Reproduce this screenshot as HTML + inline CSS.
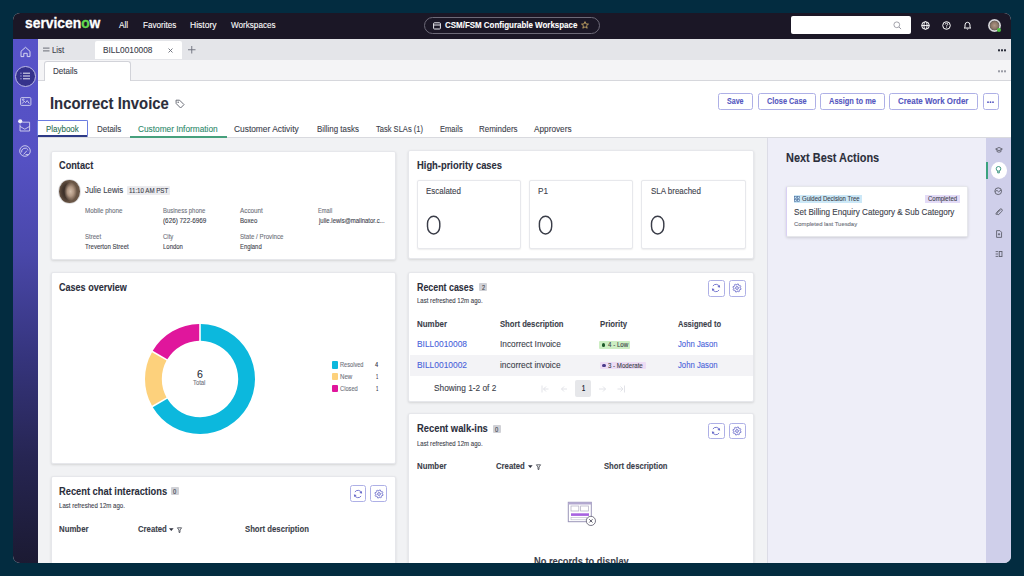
<!DOCTYPE html>
<html><head><meta charset="utf-8">
<style>
*{margin:0;padding:0;box-sizing:border-box}
html,body{width:1024px;height:576px;overflow:hidden;background:#032c40;font-family:"Liberation Sans",sans-serif;color:#2b2e3b}
.a{position:absolute}
.win{position:absolute;left:0;top:0;width:1024px;height:576px;clip-path:inset(13px 13px 13px 13px round 7px);background:#f1f2f4}
.t{position:absolute;white-space:nowrap;line-height:1;transform-origin:0 0;-webkit-text-stroke:0.1px currentColor}
.card{position:absolute;background:#fff;border:1px solid #e6e7eb;border-radius:2px;box-shadow:0 1px 2.5px rgba(0,0,0,.12)}
svg{position:absolute;overflow:visible}
</style></head><body>
<div class="win">
<!-- navbar -->
<div class="a" style="left:13px;top:13px;width:998px;height:25.5px;background:#1b1726"></div>
<div class="t" style="left:25px;top:16.1px;font-size:14.8px;font-weight:bold;color:#fff;transform:scaleX(0.935);-webkit-text-stroke:0.3px #fff">servicen<span style="color:#62d84e;-webkit-text-stroke:0.3px #62d84e">o</span>w</div>
<div class="a" style="left:424px;top:17px;width:176px;height:16.5px;border:1px solid #6d6a78;border-radius:9px"></div>
<svg style="left:433px;top:21.5px" width="8" height="8" viewBox="0 0 8 8"><rect x="0.6" y="0.8" width="6.8" height="6.2" rx="0.8" fill="none" stroke="#e8e8ee" stroke-width="1"/><line x1="0.6" y1="3" x2="7.4" y2="3" stroke="#e8e8ee" stroke-width="1"/></svg>
<svg style="left:581px;top:21px" width="8" height="8" viewBox="0 0 10 10"><path d="M5 0.8 L6.2 3.7 L9.3 3.9 L6.9 5.9 L7.7 9 L5 7.3 L2.3 9 L3.1 5.9 L0.7 3.9 L3.8 3.7 Z" fill="none" stroke="#c9a865" stroke-width="1.1" stroke-linejoin="round"/></svg>
<div class="a" style="left:790.5px;top:16.3px;width:120px;height:18px;background:#fff;border-radius:2px"></div>
<svg style="left:893px;top:21px" width="9" height="9" viewBox="0 0 10 10"><circle cx="4.2" cy="4.2" r="3.2" fill="none" stroke="#9a9aa3" stroke-width="1"/><line x1="6.6" y1="6.6" x2="9" y2="9" stroke="#9a9aa3" stroke-width="1.1"/></svg>
<svg style="left:920.5px;top:20.5px" width="9" height="9" viewBox="0 0 9 9"><circle cx="4.5" cy="4.5" r="3.8" fill="none" stroke="#fff" stroke-width="1"/><ellipse cx="4.5" cy="4.5" rx="1.6" ry="3.8" fill="none" stroke="#fff" stroke-width="0.9"/><line x1="0.7" y1="4.5" x2="8.3" y2="4.5" stroke="#fff" stroke-width="0.9"/></svg>
<svg style="left:941.5px;top:20.5px" width="9" height="9" viewBox="0 0 9 9"><circle cx="4.5" cy="4.5" r="3.8" fill="none" stroke="#fff" stroke-width="1"/><path d="M3.2 3.5 Q3.3 2.2 4.5 2.2 Q5.8 2.2 5.8 3.3 Q5.8 4.1 4.6 4.6 L4.6 5.5" fill="none" stroke="#fff" stroke-width="0.9"/><circle cx="4.6" cy="6.7" r="0.5" fill="#fff"/></svg>
<svg style="left:962.5px;top:20.5px" width="9" height="9" viewBox="0 0 9 9"><path d="M2 6.5 L2 4 Q2 1.3 4.5 1.3 Q7 1.3 7 4 L7 6.5 L7.8 7 L1.2 7 Z" fill="none" stroke="#fff" stroke-width="0.95" stroke-linejoin="round"/><path d="M3.7 7.8 Q4.5 8.6 5.3 7.8" fill="none" stroke="#fff" stroke-width="0.9"/></svg>
<div class="a" style="left:987.7px;top:18.9px;width:13px;height:13px;border-radius:50%;background:radial-gradient(circle closest-side,#b09888 0%,#8e7868 50%,#6a625c 72%,#e0e0e4 80%,#c8c8cc 100%)"></div><div class="a" style="left:997px;top:28px;width:4px;height:4px;border-radius:50%;background:#4cc43e"></div>
<!-- left sidebar -->
<div class="a" style="left:13px;top:38.5px;width:25px;height:525px;background:linear-gradient(#5753c8 0%,#5551c3 23%,#4a48ab 40%,#35347c 61%,#262552 80%,#1b1a32 100%)"></div>
<svg style="left:19px;top:45.5px" width="13" height="12" viewBox="0 0 13 12"><path d="M2 10.6 L2 5.3 L6.5 1.3 L11 5.3 L11 10.6 L8.2 10.6 L8.2 7.3 L4.8 7.3 L4.8 10.6 Z" fill="none" stroke="#dcdcf2" stroke-width="0.95" stroke-linejoin="round"/></svg>
<div class="a" style="left:15px;top:65.8px;width:21px;height:21px;border-radius:50%;background:#35328c;border:1px solid #bdbbe4"></div>
<svg style="left:20px;top:72px" width="11" height="8" viewBox="0 0 11 8"><g stroke="#f4f4fc" stroke-width="0.95"><line x1="3" y1="1.2" x2="10" y2="1.2"/><line x1="3" y1="4" x2="10" y2="4"/><line x1="3" y1="6.8" x2="10" y2="6.8"/></g><g stroke="#b8b6e6" stroke-width="0.95"><line x1="0.3" y1="1.2" x2="1.6" y2="1.2"/><line x1="0.3" y1="4" x2="1.6" y2="4"/><line x1="0.3" y1="6.8" x2="1.6" y2="6.8"/></g></svg>
<svg style="left:19.7px;top:96.6px" width="11.5" height="9" viewBox="0 0 11.5 9"><g fill="none" stroke="#dcdcf2" stroke-width="0.85"><rect x="0.6" y="0.6" width="10.3" height="7.8" rx="1"/><path d="M2.2 6.6 L4.2 4.2 L5.6 5.6 L7.2 3.6 L9.3 6.6"/><circle cx="3.2" cy="2.7" r="0.8"/></g></svg>
<svg style="left:18.2px;top:118.6px" width="13" height="13" viewBox="0 0 13 13"><g fill="none" stroke="#dcdcf2" stroke-width="0.85"><path d="M4.2 3.2 H11.6 V12 H2 V5.5"/><path d="M2 7.4 L6.8 10.2 L11.6 7.4"/></g><circle cx="2.2" cy="2.3" r="2.1" fill="#f0f0fa"/></svg>
<svg style="left:19.3px;top:145.3px" width="12" height="12" viewBox="0 0 12 12"><g fill="none" stroke="#dcdcf2" stroke-width="0.85"><circle cx="6" cy="6" r="5.3"/><path d="M2.6 7.4 A3.6 3.6 0 0 1 9.3 5"/><path d="M4.6 9.4 L8 5.6"/><path d="M6.5 9.6 H9.6"/></g></svg>
<!-- tab row 1 -->
<div class="a" style="left:38px;top:38.5px;width:973px;height:21px;background:#e4e5e9"></div>
<div class="a" style="left:95px;top:40.8px;width:87px;height:18.7px;background:#fff;border-radius:2px 2px 0 0"></div>
<svg style="left:43px;top:47.2px" width="6.5" height="5" viewBox="0 0 7 5"><g stroke="#4a4d58" stroke-width="0.85"><line x1="0" y1="1" x2="7" y2="1"/><line x1="0" y1="4" x2="7" y2="4"/></g></svg>
<svg style="left:167.5px;top:47.5px" width="5" height="5" viewBox="0 0 5 5"><g stroke="#6a6d78" stroke-width="0.9"><line x1="0.5" y1="0.5" x2="4.5" y2="4.5"/><line x1="4.5" y1="0.5" x2="0.5" y2="4.5"/></g></svg>
<svg style="left:188.2px;top:46.2px" width="7.5" height="7.5" viewBox="0 0 8 8"><g stroke="#6a6d78" stroke-width="0.95"><line x1="4" y1="0" x2="4" y2="8"/><line x1="0" y1="4" x2="8" y2="4"/></g></svg>
<svg style="left:998px;top:49px" width="8" height="3" viewBox="0 0 8 3"><g fill="#2b2e3b"><rect x="0" y="0.3" width="2" height="2"/><rect x="3" y="0.3" width="2" height="2"/><rect x="6" y="0.3" width="2" height="2"/></g></svg>
<!-- tab row 2 -->
<div class="a" style="left:38px;top:59.5px;width:973px;height:21.5px;background:#f4f4f6;border-bottom:1px solid #d6d7dc"></div>
<div class="a" style="left:44px;top:61px;width:87px;height:20px;background:#fff;border:1px solid #d2d3d9;border-bottom:none;border-radius:3px 3px 0 0"></div>
<svg style="left:998px;top:70px" width="8" height="3" viewBox="0 0 8 3"><g fill="#9a9ca6"><rect x="0" y="0.3" width="2" height="2"/><rect x="3" y="0.3" width="2" height="2"/><rect x="6" y="0.3" width="2" height="2"/></g></svg>
<!-- header -->
<div class="a" style="left:38px;top:81px;width:973px;height:57px;background:#fff;border-bottom:1px solid #d9dadf"></div>
<svg style="left:174.8px;top:98.6px" width="10" height="10" viewBox="0 0 10 10"><path d="M1 1.2 L4.6 1.2 L9 5.6 L5.6 9 L1.2 4.6 Z" fill="none" stroke="#6b6e78" stroke-width="1" stroke-linejoin="round"/><circle cx="3.2" cy="3.3" r="0.8" fill="#6b6e78"/></svg>
<div class="a" style="left:718.2px;top:93.2px;width:35px;height:16.8px;border:1px solid #aeb0e6;border-radius:2.5px"></div>
<div class="a" style="left:757.5px;top:93.2px;width:58px;height:16.8px;border:1px solid #aeb0e6;border-radius:2.5px"></div>
<div class="a" style="left:820px;top:93.2px;width:64.6px;height:16.8px;border:1px solid #aeb0e6;border-radius:2.5px"></div>
<div class="a" style="left:889.2px;top:93.2px;width:88.5px;height:16.8px;border:1px solid #aeb0e6;border-radius:2.5px"></div>
<div class="a" style="left:982.5px;top:93.2px;width:16.2px;height:16.8px;border:1px solid #aeb0e6;border-radius:2.5px"></div>
<svg style="left:987px;top:100.8px" width="7" height="2.5" viewBox="0 0 7 2.5"><g fill="#5456c0"><circle cx="1" cy="1.2" r="0.9"/><circle cx="3.5" cy="1.2" r="0.9"/><circle cx="6" cy="1.2" r="0.9"/></g></svg>
<!-- tab bar -->
<div class="a" style="left:37.2px;top:120.4px;width:50.6px;height:16.8px;border:1.7px solid #6a7ce0;border-bottom:2px solid #2d3a86;border-radius:1.5px"></div>
<div class="a" style="left:130px;top:135.8px;width:96.5px;height:2px;background:#46a07c"></div>
<!-- content cards -->
<div class="card" style="left:50.7px;top:150.6px;width:345px;height:109.8px"></div>
<div class="card" style="left:50.7px;top:272.3px;width:345px;height:192px"></div>
<div class="card" style="left:50.7px;top:476.4px;width:345px;height:110px"></div>
<div class="card" style="left:408.3px;top:150.4px;width:345.3px;height:108.4px"></div>
<div class="card" style="left:408.3px;top:272px;width:345.3px;height:129.5px"></div>
<div class="card" style="left:408.3px;top:413.4px;width:345.3px;height:160px"></div>
<!-- contact avatar + badge -->
<div class="a" style="left:59.2px;top:180px;width:20.5px;height:22.6px;border-radius:50%;background:radial-gradient(ellipse closest-side at 35% 50%,#2c221e 0%,#47382f 60%,#6a5646 100%);box-shadow:0 0 0 0.8px #d8d8dc;overflow:hidden"><div class="a" style="left:5px;top:2px;width:13px;height:19px;border-radius:50%;background:radial-gradient(ellipse closest-side,#d2bdaa 0%,#b09682 50%,rgba(140,112,92,0) 100%)"></div></div>
<div class="a" style="left:126.6px;top:186.2px;width:43.4px;height:8.6px;background:#ebebee;border-radius:1px"></div>
<!-- hp inner cards -->
<div class="card" style="left:417.3px;top:179.8px;width:103.7px;height:69.7px;box-shadow:0 0.5px 1.5px rgba(0,0,0,.07);border-color:#e7e8ec"></div>
<div class="card" style="left:529.4px;top:179.8px;width:103.6px;height:69.7px;box-shadow:0 0.5px 1.5px rgba(0,0,0,.07);border-color:#e7e8ec"></div>
<div class="card" style="left:641.4px;top:179.8px;width:104.5px;height:69.7px;box-shadow:0 0.5px 1.5px rgba(0,0,0,.07);border-color:#e7e8ec"></div>
<!-- donut -->
<svg style="left:143.6px;top:322.7px" width="112" height="112" viewBox="0 0 112 112"><path d="M56.80 1.01 A55 55 0 1 1 8.77 84.19 L23.33 75.79 A38.2 38.2 0 1 0 56.80 17.81 Z" fill="#0cb8dd"/><path d="M7.97 82.80 A55 55 0 0 1 7.97 29.20 L22.53 37.60 A38.2 38.2 0 0 0 22.53 74.40 Z" fill="#fdd17c"/><path d="M8.77 27.81 A55 55 0 0 1 55.20 1.01 L55.20 17.81 A38.2 38.2 0 0 0 23.33 36.21 Z" fill="#e0169c"/></svg>
<div class="a" style="left:331.5px;top:361.3px;width:6.2px;height:7.5px;background:#0cb8dd;border-radius:1px"></div>
<div class="a" style="left:331.5px;top:373.4px;width:6.2px;height:7px;background:#fdd17c;border-radius:1px"></div>
<div class="a" style="left:331.5px;top:385px;width:6.2px;height:7.2px;background:#e0169c;border-radius:1px"></div>
<!-- refresh/settings buttons -->
<div class="a" style="left:708px;top:280px;width:16.8px;height:16.6px;border:1px solid #aeb0e6;border-radius:2.5px"></div>
<div class="a" style="left:728.8px;top:280px;width:16.9px;height:16.6px;border:1px solid #aeb0e6;border-radius:2.5px"></div>
<div class="a" style="left:708px;top:422.8px;width:16.8px;height:16.6px;border:1px solid #aeb0e6;border-radius:2.5px"></div>
<div class="a" style="left:728.8px;top:422.8px;width:16.9px;height:16.6px;border:1px solid #aeb0e6;border-radius:2.5px"></div>
<div class="a" style="left:349.6px;top:485.4px;width:16.8px;height:16.8px;border:1px solid #aeb0e6;border-radius:2.5px"></div>
<div class="a" style="left:370.3px;top:485.4px;width:16.6px;height:16.8px;border:1px solid #aeb0e6;border-radius:2.5px"></div>
<!-- badges -->
<div class="a" style="left:478.8px;top:282.6px;width:8.7px;height:8px;background:#d0d1d6;border-radius:1px"></div>
<div class="a" style="left:492.5px;top:424.6px;width:8px;height:8px;background:#d0d1d6;border-radius:1px"></div>
<div class="a" style="left:170.7px;top:487.3px;width:8.3px;height:8px;background:#d0d1d6;border-radius:1px"></div>
<!-- recent cases rows -->
<div class="a" style="left:410px;top:355px;width:343px;height:20.5px;background:#f3f3f6"></div>
<div class="a" style="left:598.8px;top:341.2px;width:31.2px;height:7.6px;background:#cdeec3;border-radius:1px"></div>
<div class="a" style="left:599.5px;top:361.5px;width:46.2px;height:7.6px;background:#eddcf5;border-radius:1px"></div>
<div class="a" style="left:575.3px;top:380px;width:16.2px;height:16.5px;background:#e6e7ea;border-radius:2px"></div>
<!-- nba -->
<div class="a" style="left:766.8px;top:138px;width:219.2px;height:425px;background:#eeeef8;border-left:1px solid #dcdce6"></div>
<div class="a" style="left:986px;top:138px;width:25px;height:425px;background:#cfcfea"></div>
<div class="card" style="left:786.2px;top:186px;width:181.6px;height:51px;border-left:1.5px solid #d9d0f4;box-shadow:0 1px 3px rgba(0,0,0,.14)"></div>
<div class="a" style="left:793.7px;top:195px;width:68.7px;height:7.6px;background:#cce8f7"></div>
<div class="a" style="left:925px;top:195px;width:34.7px;height:7.6px;background:#e3dbf7"></div>
<!-- hp zeros -->
<svg style="left:420px;top:210px" width="30" height="30" viewBox="0 0 30 30"><rect x="7.5" y="6.2" width="12.3" height="17.7" rx="6.15" ry="7.4" fill="none" stroke="#3a3d48" stroke-width="1.45"/></svg>
<svg style="left:532px;top:210px" width="30" height="30" viewBox="0 0 30 30"><rect x="7.4" y="6.2" width="12.3" height="17.7" rx="6.15" ry="7.4" fill="none" stroke="#3a3d48" stroke-width="1.45"/></svg>
<svg style="left:644px;top:210px" width="30" height="30" viewBox="0 0 30 30"><rect x="7.5" y="6.2" width="12.3" height="17.7" rx="6.15" ry="7.4" fill="none" stroke="#3a3d48" stroke-width="1.45"/></svg>
<!-- priority dots -->
<div class="a" style="left:601.8px;top:343.2px;width:3.6px;height:3.6px;border-radius:50%;background:#1f5a2a"></div>
<div class="a" style="left:602px;top:363.8px;width:3.6px;height:3.6px;border-radius:50%;background:#4a3a8a"></div>
<!-- pagination arrows -->
<svg style="left:541px;top:384.5px" width="85" height="8" viewBox="0 0 85 8"><g fill="none" stroke="#e2e3e8" stroke-width="1"><path d="M1 0.5 V7.5 M7.5 4 H2.5 M5 1.5 L2.5 4 L5 6.5"/><path d="M26 4 H20.5 M23 1.5 L20.5 4 L23 6.5"/><path d="M58 4 H64.5 M62 1.5 L64.5 4 L62 6.5"/><path d="M76.5 4 H82 M79.5 1.5 L82 4 L79.5 6.5 M83.5 0.5 V7.5"/></g></svg>
<!-- refresh & gear icons -->
<svg style="left:711.4px;top:283.3px" width="10" height="10" viewBox="0 0 10 10"><g fill="none" stroke="#6062c6" stroke-width="0.85"><path d="M8.6 4.2 A3.7 3.7 0 0 0 1.9 3"/><path d="M1.4 5.8 A3.7 3.7 0 0 0 8.1 7"/></g><path d="M8.9 1.9 L8.9 4.6 L6.4 4.1 Z" fill="#6062c6"/><path d="M1.1 8.1 L1.1 5.4 L3.6 5.9 Z" fill="#6062c6"/></svg>
<svg style="left:732.2px;top:283.3px" width="10" height="10" viewBox="0 0 10 10"><g fill="none" stroke="#6466c8" stroke-width="0.85" stroke-linejoin="round"><path d="M8.20 5.00 L9.07 5.48 L8.79 6.57 L7.79 6.56 L7.26 7.26 L7.54 8.22 L6.57 8.79 L5.87 8.08 L5.00 8.20 L4.52 9.07 L3.43 8.79 L3.44 7.79 L2.74 7.26 L1.78 7.54 L1.21 6.57 L1.92 5.87 L1.80 5.00 L0.93 4.52 L1.21 3.43 L2.21 3.44 L2.74 2.74 L2.46 1.78 L3.43 1.21 L4.13 1.92 L5.00 1.80 L5.48 0.93 L6.57 1.21 L6.56 2.21 L7.26 2.74 L8.22 2.46 L8.79 3.43 L8.08 4.13 Z"/><circle cx="5" cy="5" r="1.4"/></g></svg>
<svg style="left:711.4px;top:426.1px" width="10" height="10" viewBox="0 0 10 10"><g fill="none" stroke="#6062c6" stroke-width="0.85"><path d="M8.6 4.2 A3.7 3.7 0 0 0 1.9 3"/><path d="M1.4 5.8 A3.7 3.7 0 0 0 8.1 7"/></g><path d="M8.9 1.9 L8.9 4.6 L6.4 4.1 Z" fill="#6062c6"/><path d="M1.1 8.1 L1.1 5.4 L3.6 5.9 Z" fill="#6062c6"/></svg>
<svg style="left:732.2px;top:426.1px" width="10" height="10" viewBox="0 0 10 10"><g fill="none" stroke="#6466c8" stroke-width="0.85" stroke-linejoin="round"><path d="M8.20 5.00 L9.07 5.48 L8.79 6.57 L7.79 6.56 L7.26 7.26 L7.54 8.22 L6.57 8.79 L5.87 8.08 L5.00 8.20 L4.52 9.07 L3.43 8.79 L3.44 7.79 L2.74 7.26 L1.78 7.54 L1.21 6.57 L1.92 5.87 L1.80 5.00 L0.93 4.52 L1.21 3.43 L2.21 3.44 L2.74 2.74 L2.46 1.78 L3.43 1.21 L4.13 1.92 L5.00 1.80 L5.48 0.93 L6.57 1.21 L6.56 2.21 L7.26 2.74 L8.22 2.46 L8.79 3.43 L8.08 4.13 Z"/><circle cx="5" cy="5" r="1.4"/></g></svg>
<svg style="left:353px;top:488.8px" width="10" height="10" viewBox="0 0 10 10"><g fill="none" stroke="#6062c6" stroke-width="0.85"><path d="M8.6 4.2 A3.7 3.7 0 0 0 1.9 3"/><path d="M1.4 5.8 A3.7 3.7 0 0 0 8.1 7"/></g><path d="M8.9 1.9 L8.9 4.6 L6.4 4.1 Z" fill="#6062c6"/><path d="M1.1 8.1 L1.1 5.4 L3.6 5.9 Z" fill="#6062c6"/></svg>
<svg style="left:373.6px;top:488.8px" width="10" height="10" viewBox="0 0 10 10"><g fill="none" stroke="#6466c8" stroke-width="0.85" stroke-linejoin="round"><path d="M8.20 5.00 L9.07 5.48 L8.79 6.57 L7.79 6.56 L7.26 7.26 L7.54 8.22 L6.57 8.79 L5.87 8.08 L5.00 8.20 L4.52 9.07 L3.43 8.79 L3.44 7.79 L2.74 7.26 L1.78 7.54 L1.21 6.57 L1.92 5.87 L1.80 5.00 L0.93 4.52 L1.21 3.43 L2.21 3.44 L2.74 2.74 L2.46 1.78 L3.43 1.21 L4.13 1.92 L5.00 1.80 L5.48 0.93 L6.57 1.21 L6.56 2.21 L7.26 2.74 L8.22 2.46 L8.79 3.43 L8.08 4.13 Z"/><circle cx="5" cy="5" r="1.4"/></g></svg>
<!-- created sort/filter icons -->
<svg style="left:527.8px;top:464px" width="14" height="6" viewBox="0 0 14 6"><path d="M0 1.3 H4.6 L2.3 4 Z" fill="#2b2e3b"/><path d="M8.4 0.8 H12.6 L11 3 V5.4 H10 V3 Z" fill="none" stroke="#3a3d48" stroke-width="0.8" stroke-linejoin="round"/></svg>
<svg style="left:169.3px;top:527.3px" width="14" height="6" viewBox="0 0 14 6"><path d="M0 1.3 H4.6 L2.3 4 Z" fill="#2b2e3b"/><path d="M8.4 0.8 H12.6 L11 3 V5.4 H10 V3 Z" fill="none" stroke="#3a3d48" stroke-width="0.8" stroke-linejoin="round"/></svg>
<!-- empty illustration -->
<svg style="left:567px;top:501px" width="32" height="27" viewBox="0 0 32 27">
<rect x="1.3" y="1.3" width="23" height="19.4" fill="#fff" stroke="#9a95b8" stroke-width="1"/>
<rect x="1.3" y="1.3" width="23" height="2.2" fill="#b3a8d0"/>
<rect x="4" y="5" width="7.8" height="5" fill="#fff" stroke="#b8b5c8" stroke-width="0.8"/>
<rect x="13.6" y="5" width="7.8" height="5" fill="#fff" stroke="#b8b5c8" stroke-width="0.8"/>
<rect x="4" y="12.3" width="18" height="2.6" fill="#a862e0"/>
<rect x="4" y="16.4" width="16" height="2.4" fill="#fff" stroke="#b8b5c8" stroke-width="0.6"/>
<circle cx="23.9" cy="19.9" r="4.6" fill="#fff" stroke="#6a6878" stroke-width="0.9"/>
<path d="M22.3 18.3 L25.5 21.5 M25.5 18.3 L22.3 21.5" stroke="#4a4858" stroke-width="0.9"/>
</svg>
<!-- right strip icons -->
<div class="a" style="left:986.3px;top:162.4px;width:1.6px;height:16.7px;background:#3aa27f"></div>
<div class="a" style="left:990.6px;top:162.2px;width:16.5px;height:16.8px;border-radius:50%;background:#fff"></div>
<svg style="left:994.6px;top:145.5px" width="8" height="8" viewBox="0 0 10 10"><g fill="none" stroke="#5d5f6b" stroke-width="1.1"><path d="M0.8 3.8 L5 1.8 L9.2 3.8 L5 5.8 Z"/><path d="M2.5 4.7 V7 Q5 8.6 7.5 7 V4.7"/></g></svg>
<svg style="left:995.1px;top:166.3px" width="7" height="8" viewBox="0 0 10 11.4"><g fill="none" stroke="#2e9078" stroke-width="1.3"><circle cx="5" cy="4" r="3.3"/><path d="M3.8 7.3 V9.8 H6.2 V7.3"/></g></svg>
<svg style="left:994.4px;top:187px" width="8.4" height="8.4" viewBox="0 0 10 10"><g fill="none" stroke="#5d5f6b" stroke-width="1.1"><circle cx="5" cy="5" r="4"/><path d="M1.5 5.5 L3.5 4 L5.5 5.8 L8.5 3.5"/></g></svg>
<svg style="left:994.6px;top:208.4px" width="8" height="8" viewBox="0 0 10 10"><g fill="none" stroke="#5d5f6b" stroke-width="1.2"><path d="M6.8 2.4 L3 6.2 Q2.2 7.2 3 8 Q3.8 8.8 4.8 8 L8.4 4.4 Q9.8 2.8 8.6 1.6 Q7.3 0.4 5.8 1.8 L2 5.6 Q0.6 7.2 1.8 8.6"/></g></svg>
<svg style="left:994.6px;top:229.5px" width="8" height="8" viewBox="0 0 10 10"><g fill="none" stroke="#5d5f6b" stroke-width="1.1"><path d="M2 0.8 H6.2 L8.2 2.8 V9.2 H2 Z"/><path d="M3.6 5.3 H6.4 M5 3.9 V6.7"/></g></svg>
<svg style="left:994.6px;top:249.6px" width="8" height="8" viewBox="0 0 10 10"><g fill="none" stroke="#5d5f6b" stroke-width="1.1"><path d="M0.8 2 H4 M0.8 5 H4 M0.8 8 H4"/><rect x="5.3" y="1.8" width="3.4" height="6.4"/></g></svg>
<!-- gdt icon -->
<svg style="left:794.3px;top:195.8px" width="6" height="6" viewBox="0 0 7 7"><g fill="none" stroke="#4a6a9a" stroke-width="0.7"><rect x="0.5" y="0.5" width="2.4" height="2.4"/><rect x="4" y="0.5" width="2.4" height="2.4"/><rect x="0.5" y="4" width="2.4" height="2.4"/><rect x="4" y="4" width="2.4" height="2.4"/></g></svg>

<div class="t" id="n_all" style="left:119.30px;top:20.04px;font-size:9.88px;font-weight:normal;color:#fff;transform:scaleX(0.8348);">All</div>
<div class="t" id="n_fav" style="left:142.50px;top:20.04px;font-size:9.88px;font-weight:normal;color:#fff;transform:scaleX(0.8212);">Favorites</div>
<div class="t" id="n_his" style="left:190.40px;top:20.04px;font-size:9.88px;font-weight:normal;color:#fff;transform:scaleX(0.8640);">History</div>
<div class="t" id="n_ws" style="left:231.40px;top:20.04px;font-size:9.88px;font-weight:normal;color:#fff;transform:scaleX(0.8227);">Workspaces</div>
<div class="t" id="n_csm" style="left:445.00px;top:21.34px;font-size:8.58px;font-weight:bold;color:#fff;transform:scaleX(0.9269);">CSM/FSM Configurable Workspace</div>
<div class="t" id="t_list" style="left:52.40px;top:45.87px;font-size:9.01px;font-weight:normal;color:#3b3e4a;transform:scaleX(0.8618);">List</div>
<div class="t" id="t_bill" style="left:103.40px;top:46.24px;font-size:8.58px;font-weight:normal;color:#3b3e4a;transform:scaleX(0.9674);">BILL0010008</div>
<div class="t" id="t_det" style="left:52.90px;top:67.15px;font-size:9.16px;font-weight:normal;color:#3b3e4a;transform:scaleX(0.8800);">Details</div>
<div class="t" id="h_title" style="left:49.72px;top:96.09px;font-size:16.90px;font-weight:bold;color:#2b2e3b;transform:scaleX(0.8790);">Incorrect Invoice</div>
<div class="t" id="b_save" style="left:727.40px;top:97.39px;font-size:8.87px;font-weight:bold;color:#5456c0;transform:scaleX(0.7995);">Save</div>
<div class="t" id="b_close" style="left:766.60px;top:97.39px;font-size:8.87px;font-weight:bold;color:#5456c0;transform:scaleX(0.8299);">Close Case</div>
<div class="t" id="b_assign" style="left:828.90px;top:97.39px;font-size:8.87px;font-weight:bold;color:#5456c0;transform:scaleX(0.8438);">Assign to me</div>
<div class="t" id="b_cwo" style="left:898.10px;top:97.39px;font-size:8.87px;font-weight:bold;color:#5456c0;transform:scaleX(0.8956);">Create Work Order</div>
<div class="t" id="tb_play" style="left:46.20px;top:124.77px;font-size:9.01px;font-weight:normal;color:#2a6e52;transform:scaleX(0.8848);">Playbook</div>
<div class="t" id="tb_det" style="left:96.50px;top:124.77px;font-size:9.01px;font-weight:normal;color:#3b3e4a;transform:scaleX(0.8854);">Details</div>
<div class="t" id="tb_ci" style="left:138.00px;top:124.77px;font-size:9.01px;font-weight:normal;color:#2e8a6c;transform:scaleX(0.9199);">Customer Information</div>
<div class="t" id="tb_ca" style="left:234.40px;top:124.77px;font-size:9.01px;font-weight:normal;color:#3b3e4a;transform:scaleX(0.9303);">Customer Activity</div>
<div class="t" id="tb_bt" style="left:316.70px;top:124.77px;font-size:9.01px;font-weight:normal;color:#3b3e4a;transform:scaleX(0.8809);">Billing tasks</div>
<div class="t" id="tb_sla" style="left:376.00px;top:124.77px;font-size:9.01px;font-weight:normal;color:#3b3e4a;transform:scaleX(0.8390);">Task SLAs (1)</div>
<div class="t" id="tb_em" style="left:439.50px;top:124.77px;font-size:9.01px;font-weight:normal;color:#3b3e4a;transform:scaleX(0.8399);">Emails</div>
<div class="t" id="tb_rem" style="left:479.00px;top:124.77px;font-size:9.01px;font-weight:normal;color:#3b3e4a;transform:scaleX(0.8861);">Reminders</div>
<div class="t" id="tb_app" style="left:534.00px;top:124.77px;font-size:9.01px;font-weight:normal;color:#3b3e4a;transform:scaleX(0.9153);">Approvers</div>
<div class="t" id="c_title" style="left:59.20px;top:160.42px;font-size:10.61px;font-weight:bold;color:#2b2e3b;transform:scaleX(0.8659);">Contact</div>
<div class="t" id="c_name" style="left:85.20px;top:186.37px;font-size:9.01px;font-weight:normal;color:#3b3e4a;transform:scaleX(0.8670);">Julie Lewis</div>
<div class="t" id="c_time" style="left:128.50px;top:188.14px;font-size:6.69px;font-weight:normal;color:#3b3e4a;transform:scaleX(0.9206);">11:10 AM PST</div>
<div class="t" id="c_mob" style="left:85.10px;top:208.11px;font-size:6.60px;font-weight:normal;color:#6e717b;transform:scaleX(0.9468);">Mobile phone</div>
<div class="t" id="c_bus" style="left:162.80px;top:208.11px;font-size:6.60px;font-weight:normal;color:#6e717b;transform:scaleX(0.9015);">Business phone</div>
<div class="t" id="c_acc" style="left:240.20px;top:208.11px;font-size:6.60px;font-weight:normal;color:#6e717b;transform:scaleX(0.9586);">Account</div>
<div class="t" id="c_email" style="left:317.80px;top:208.11px;font-size:6.60px;font-weight:normal;color:#6e717b;transform:scaleX(0.8636);">Email</div>
<div class="t" id="c_busv" style="left:162.80px;top:217.29px;font-size:6.98px;font-weight:normal;color:#3b3e4a;transform:scaleX(0.9104);">(626) 722-6969</div>
<div class="t" id="c_accv" style="left:240.20px;top:217.29px;font-size:6.98px;font-weight:normal;color:#3b3e4a;transform:scaleX(0.8751);">Boxeo</div>
<div class="t" id="c_emailv" style="left:318.66px;top:217.29px;font-size:6.98px;font-weight:normal;color:#3b3e4a;transform:scaleX(0.8598);">julie.lewis@mailnator.c...</div>
<div class="t" id="c_st" style="left:85.10px;top:234.11px;font-size:6.60px;font-weight:normal;color:#6e717b;transform:scaleX(0.9122);">Street</div>
<div class="t" id="c_city" style="left:162.80px;top:234.11px;font-size:6.60px;font-weight:normal;color:#6e717b;transform:scaleX(0.9039);">City</div>
<div class="t" id="c_state" style="left:240.20px;top:234.11px;font-size:6.60px;font-weight:normal;color:#6e717b;transform:scaleX(0.9343);">State / Province</div>
<div class="t" id="c_stv" style="left:85.10px;top:243.29px;font-size:6.98px;font-weight:normal;color:#3b3e4a;transform:scaleX(0.8733);">Treverton Street</div>
<div class="t" id="c_cityv" style="left:162.80px;top:243.29px;font-size:6.98px;font-weight:normal;color:#3b3e4a;transform:scaleX(0.8555);">London</div>
<div class="t" id="c_statev" style="left:240.20px;top:243.29px;font-size:6.98px;font-weight:normal;color:#3b3e4a;transform:scaleX(0.8483);">England</div>
<div class="t" id="hp_title" style="left:417.30px;top:160.48px;font-size:11.48px;font-weight:bold;color:#2b2e3b;transform:scaleX(0.8183);">High-priority cases</div>
<div class="t" id="hp_esc" style="left:426.00px;top:186.10px;font-size:9.45px;font-weight:normal;color:#3b3e4a;transform:scaleX(0.8423);">Escalated</div>
<div class="t" id="hp_p1" style="left:538.40px;top:186.10px;font-size:9.45px;font-weight:normal;color:#3b3e4a;transform:scaleX(0.8677);">P1</div>
<div class="t" id="hp_sla" style="left:650.50px;top:186.10px;font-size:9.45px;font-weight:normal;color:#3b3e4a;transform:scaleX(0.8428);">SLA breached</div>
<div class="t" id="co_title" style="left:59.30px;top:282.79px;font-size:10.17px;font-weight:bold;color:#2b2e3b;transform:scaleX(0.8897);">Cases overview</div>
<div class="t" id="rc_title" style="left:417.30px;top:281.52px;font-size:10.61px;font-weight:bold;color:#2b2e3b;transform:scaleX(0.8347);">Recent cases</div>
<div class="t" id="rc_ref" style="left:417.30px;top:298.03px;font-size:6.70px;font-weight:normal;color:#3b3e4a;transform:scaleX(0.9045);">Last refreshed 12m ago.</div>
<div class="t" id="rc_h1" style="left:417.30px;top:318.94px;font-size:9.88px;font-weight:bold;color:#3b3e4a;transform:scaleX(0.8034);">Number</div>
<div class="t" id="rc_h2" style="left:500.00px;top:318.94px;font-size:9.88px;font-weight:bold;color:#3b3e4a;transform:scaleX(0.7771);">Short description</div>
<div class="t" id="rc_h3" style="left:599.50px;top:318.94px;font-size:9.88px;font-weight:bold;color:#3b3e4a;transform:scaleX(0.7839);">Priority</div>
<div class="t" id="rc_h4" style="left:677.50px;top:318.94px;font-size:9.88px;font-weight:bold;color:#3b3e4a;transform:scaleX(0.7613);">Assigned to</div>
<div class="t" id="rc_r1a" style="left:417.30px;top:340.15px;font-size:9.16px;font-weight:normal;color:#4862da;transform:scaleX(0.9175);">BILL0010008</div>
<div class="t" id="rc_r1b" style="left:500.00px;top:340.15px;font-size:9.16px;font-weight:normal;color:#3b3e4a;transform:scaleX(0.9064);">Incorrect Invoice</div>
<div class="t" id="rc_r1d" style="left:677.50px;top:340.15px;font-size:9.16px;font-weight:normal;color:#4862da;transform:scaleX(0.8451);">John Jason</div>
<div class="t" id="rc_r2a" style="left:417.30px;top:361.15px;font-size:9.16px;font-weight:normal;color:#4862da;transform:scaleX(0.9175);">BILL0010002</div>
<div class="t" id="rc_r2b" style="left:500.00px;top:361.15px;font-size:9.16px;font-weight:normal;color:#3b3e4a;transform:scaleX(0.9158);">incorrect invoice</div>
<div class="t" id="rc_r2d" style="left:677.50px;top:361.15px;font-size:9.16px;font-weight:normal;color:#4862da;transform:scaleX(0.8451);">John Jason</div>
<div class="t" id="rc_show" style="left:434.30px;top:384.15px;font-size:9.16px;font-weight:normal;color:#3b3e4a;transform:scaleX(0.9064);">Showing 1-2 of 2</div>
<div class="t" id="wi_title" style="left:417.30px;top:423.38px;font-size:11.48px;font-weight:bold;color:#2b2e3b;transform:scaleX(0.8169);">Recent walk-ins</div>
<div class="t" id="wi_ref" style="left:417.30px;top:440.73px;font-size:6.70px;font-weight:normal;color:#3b3e4a;transform:scaleX(0.9045);">Last refreshed 12m ago.</div>
<div class="t" id="wi_h1" style="left:417.40px;top:462.09px;font-size:8.87px;font-weight:bold;color:#3b3e4a;transform:scaleX(0.8817);">Number</div>
<div class="t" id="wi_h2" style="left:496.20px;top:462.09px;font-size:8.87px;font-weight:bold;color:#3b3e4a;transform:scaleX(0.8748);">Created</div>
<div class="t" id="wi_h3" style="left:603.80px;top:462.09px;font-size:8.87px;font-weight:bold;color:#3b3e4a;transform:scaleX(0.8666);">Short description</div>
<div class="t" id="wi_none" style="left:533.70px;top:556.37px;font-size:10.90px;font-weight:bold;color:#3b3e4a;transform:scaleX(0.8509);">No records to display</div>
<div class="t" id="ch_title" style="left:59.00px;top:486.08px;font-size:11.48px;font-weight:bold;color:#2b2e3b;transform:scaleX(0.8116);">Recent chat interactions</div>
<div class="t" id="ch_ref" style="left:59.00px;top:503.13px;font-size:6.70px;font-weight:normal;color:#3b3e4a;transform:scaleX(0.9087);">Last refreshed 12m ago.</div>
<div class="t" id="ch_h1" style="left:59.00px;top:525.39px;font-size:8.87px;font-weight:bold;color:#3b3e4a;transform:scaleX(0.8817);">Number</div>
<div class="t" id="ch_h2" style="left:137.50px;top:525.39px;font-size:8.87px;font-weight:bold;color:#3b3e4a;transform:scaleX(0.8748);">Created</div>
<div class="t" id="ch_h3" style="left:245.00px;top:525.39px;font-size:8.87px;font-weight:bold;color:#3b3e4a;transform:scaleX(0.8721);">Short description</div>
<div class="t" id="nba_title" style="left:786.25px;top:152.46px;font-size:12.21px;font-weight:bold;color:#2b2e3b;transform:scaleX(0.8959);">Next Best Actions</div>
<div class="t" id="nba_gdt" style="left:802.00px;top:195.76px;font-size:6.54px;font-weight:normal;color:#3b3e4a;transform:scaleX(0.9164);">Guided Decision Tree</div>
<div class="t" id="nba_comp" style="left:927.90px;top:195.76px;font-size:6.54px;font-weight:normal;color:#3b3e4a;transform:scaleX(0.9201);">Completed</div>
<div class="t" id="nba_set" style="left:794.00px;top:208.15px;font-size:9.16px;font-weight:normal;color:#3b3e4a;transform:scaleX(0.8854);">Set Billing Enquiry Category & Sub Category</div>
<div class="t" id="nba_last" style="left:794.00px;top:220.81px;font-size:6.25px;font-weight:normal;color:#6e717b;transform:scaleX(0.9406);">Completed last Tuesday</div>
<div class="t" id="co_6" style="left:196.70px;top:368.78px;font-size:11.48px;font-weight:normal;color:#2b2e3b;transform:scaleX(0.9167);">6</div>
<div class="t" id="co_total" style="left:193.10px;top:379.23px;font-size:7.41px;font-weight:normal;color:#6e717b;transform:scaleX(0.7938);">Total</div>
<div class="t" id="lg_res" style="left:340.10px;top:361.86px;font-size:6.54px;font-weight:normal;color:#6e717b;transform:scaleX(0.8624);">Resolved</div>
<div class="t" id="lg_new" style="left:340.10px;top:373.94px;font-size:6.69px;font-weight:normal;color:#6e717b;transform:scaleX(0.9152);">New</div>
<div class="t" id="lg_clo" style="left:340.10px;top:385.09px;font-size:6.98px;font-weight:normal;color:#6e717b;transform:scaleX(0.8205);">Closed</div>
<div class="t" id="lg_4" style="left:375.20px;top:361.86px;font-size:6.54px;font-weight:normal;color:#2b2e3b;transform:scaleX(0.8750);">4</div>
<div class="t" id="lg_1a" style="left:375.90px;top:373.94px;font-size:6.69px;font-weight:normal;color:#2b2e3b;transform:scaleX(0.6000);">1</div>
<div class="t" id="lg_1b" style="left:375.90px;top:385.09px;font-size:6.98px;font-weight:normal;color:#2b2e3b;transform:scaleX(0.6000);">1</div>
<div class="t" id="rc_low" style="left:607.70px;top:341.52px;font-size:6.83px;font-weight:normal;color:#3b3e4a;transform:scaleX(0.9038);">4 - Low</div>
<div class="t" id="rc_mod" style="left:608.00px;top:362.66px;font-size:6.54px;font-weight:normal;color:#3b3e4a;transform:scaleX(0.9386);">3 - Moderate</div>
<div class="t" id="rc_b2" style="left:481.60px;top:283.69px;font-size:6.98px;font-weight:normal;color:#3b3e4a;transform:scaleX(0.8000);">2</div>
<div class="t" id="wi_b0" style="left:494.90px;top:425.69px;font-size:6.98px;font-weight:normal;color:#3b3e4a;transform:scaleX(0.8250);">0</div>
<div class="t" id="ch_b0" style="left:173.20px;top:488.39px;font-size:6.98px;font-weight:normal;color:#3b3e4a;transform:scaleX(0.8250);">0</div>
<div class="t" id="rc_pg1" style="left:581.60px;top:384.15px;font-size:9.16px;font-weight:bold;color:#2b2e3b;transform:scaleX(0.6000);">1</div>
</div>
</body></html>
